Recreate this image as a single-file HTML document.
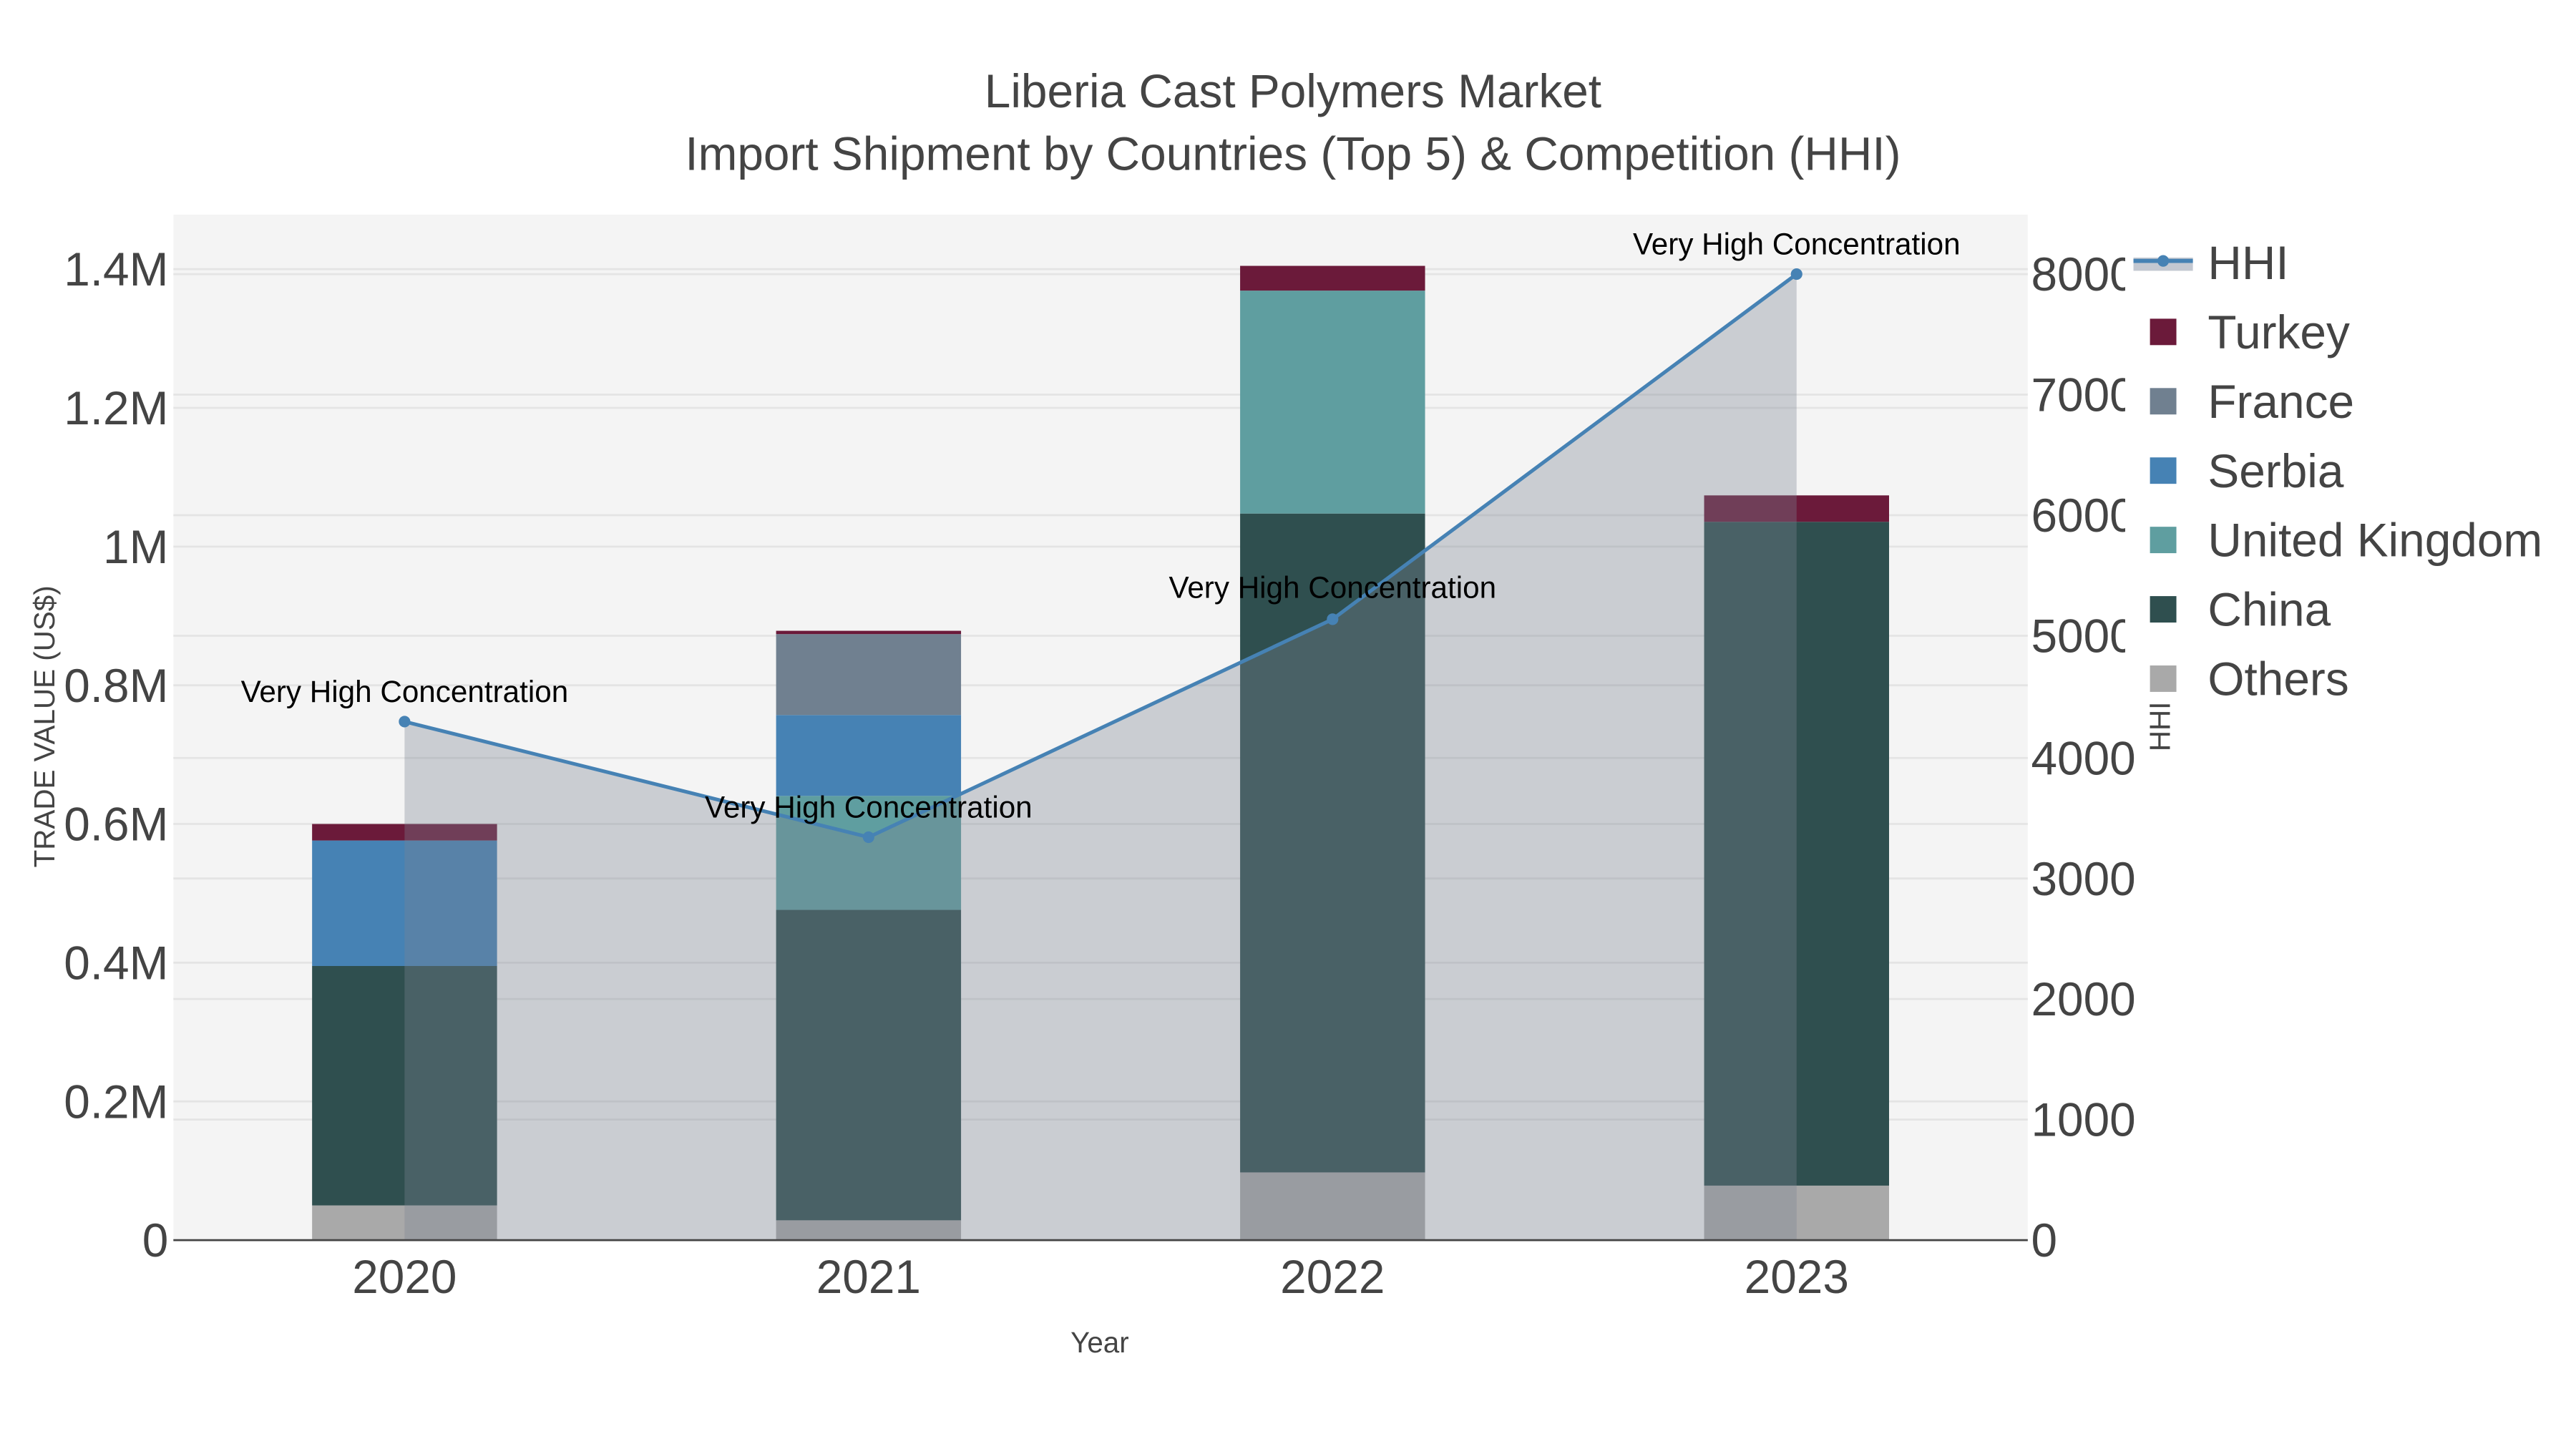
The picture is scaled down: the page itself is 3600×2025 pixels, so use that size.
<!DOCTYPE html>
<html><head><style>html,body{margin:0;padding:0;background:#fff}svg{display:block}</style></head>
<body>
<svg width="3600" height="2025" viewBox="0 0 1560 877.5" xmlns="http://www.w3.org/2000/svg" font-family="Liberation Sans, sans-serif">
<rect x="0" y="0" width="1560" height="877.5" fill="#fff"/>
<rect x="105" y="130" width="1123" height="621" fill="#f4f4f4"/>
<g stroke="#e4e4e4" stroke-width="1.2">
<line x1="105" x2="1228" y1="667" y2="667"/><line x1="105" x2="1228" y1="583" y2="583"/><line x1="105" x2="1228" y1="499" y2="499"/><line x1="105" x2="1228" y1="415" y2="415"/><line x1="105" x2="1228" y1="331" y2="331"/><line x1="105" x2="1228" y1="247" y2="247"/><line x1="105" x2="1228" y1="163" y2="163"/>
<line x1="105" x2="1228" y1="678" y2="678"/><line x1="105" x2="1228" y1="605" y2="605"/><line x1="105" x2="1228" y1="532" y2="532"/><line x1="105" x2="1228" y1="459" y2="459"/><line x1="105" x2="1228" y1="385" y2="385"/><line x1="105" x2="1228" y1="312" y2="312"/><line x1="105" x2="1228" y1="239" y2="239"/><line x1="105" x2="1228" y1="166" y2="166"/>
</g>
<g>
<rect x="189" y="730" width="112" height="21" fill="#a9a9a9"/>
<rect x="189" y="585" width="112" height="145" fill="#2f4f4f"/>
<rect x="189" y="509" width="112" height="76" fill="#4682b4"/>
<rect x="189" y="499" width="112" height="10" fill="#6b1a3a"/>

<rect x="470" y="739" width="112" height="12" fill="#a9a9a9"/>
<rect x="470" y="551" width="112" height="188" fill="#2f4f4f"/>
<rect x="470" y="482" width="112" height="69" fill="#5f9ea0"/>
<rect x="470" y="433" width="112" height="49" fill="#4682b4"/>
<rect x="470" y="384" width="112" height="49" fill="#708090"/>
<rect x="470" y="382" width="112" height="2" fill="#6b1a3a"/>

<rect x="751" y="710" width="112" height="41" fill="#a9a9a9"/>
<rect x="751" y="311" width="112" height="399" fill="#2f4f4f"/>
<rect x="751" y="176" width="112" height="135" fill="#5f9ea0"/>
<rect x="751" y="161" width="112" height="15" fill="#6b1a3a"/>

<rect x="1032" y="718" width="112" height="33" fill="#a9a9a9"/>
<rect x="1032" y="316" width="112" height="402" fill="#2f4f4f"/>
<rect x="1032" y="300" width="112" height="16" fill="#6b1a3a"/>
</g>
<path d="M245,437 L526,507 L807,375 L1088,166 L1088,751 L245,751 Z" fill="rgba(124,131,147,0.35)"/>
<polyline points="245,437 526,507 807,375 1088,166" fill="none" stroke="#4682b4" stroke-width="2.2"/>
<g fill="#4682b4"><circle cx="245" cy="437" r="3.5"/><circle cx="526" cy="507" r="3.5"/><circle cx="807" cy="375" r="3.5"/><circle cx="1088" cy="166" r="3.5"/></g>
<line x1="105" x2="1228" y1="751" y2="751" stroke="#444" stroke-width="1.2"/>
<g font-size="18.3" fill="#000" text-anchor="middle">
<text x="245" y="425">Very High Concentration</text>
<text x="526" y="495">Very High Concentration</text>
<text x="807" y="362">Very High Concentration</text>
<text x="1088" y="154">Very High Concentration</text>
</g>
<g fill="#444" text-anchor="middle" font-size="28.5">
<text x="783" y="65">Liberia Cast Polymers Market</text>
<text x="783" y="103">Import Shipment by Countries (Top 5) &amp; Competition (HHI)</text>
</g>
<g fill="#444" font-size="28.5" text-anchor="end">
<text x="102" y="761">0</text><text x="102" y="677">0.2M</text><text x="102" y="593">0.4M</text><text x="102" y="509">0.6M</text><text x="102" y="425">0.8M</text><text x="102" y="341">1M</text><text x="102" y="257">1.2M</text><text x="102" y="173">1.4M</text>
</g>
<g fill="#444" font-size="28.5">
<text x="1230" y="761">0</text><text x="1230" y="688">1000</text><text x="1230" y="615">2000</text><text x="1230" y="542">3000</text><text x="1230" y="469">4000</text><text x="1230" y="395">5000</text><text x="1230" y="322">6000</text><text x="1230" y="249">7000</text><text x="1230" y="176">8000</text>
</g>
<rect x="1287" y="135" width="273" height="300" fill="#fff"/>
<g fill="#444" font-size="28.5" text-anchor="middle">
<text x="245" y="783">2020</text><text x="526" y="783">2021</text><text x="807" y="783">2022</text><text x="1088" y="783">2023</text>
</g>
<text x="666" y="819" font-size="17.5" fill="#444" text-anchor="middle">Year</text>
<text transform="translate(33,440) rotate(-90)" font-size="17.5" fill="#444" text-anchor="middle">TRADE VALUE (US$)</text>
<text transform="translate(1314,440) rotate(-90)" font-size="17.5" fill="#444" text-anchor="middle">HHI</text>
<rect x="1292" y="156" width="36" height="8" fill="rgba(180,186,198,0.8)"/>
<line x1="1292" x2="1328" y1="158" y2="158" stroke="#4682b4" stroke-width="2.5"/>
<circle cx="1310" cy="158" r="3.5" fill="#4682b4"/>
<g>
<rect x="1302" y="193" width="16" height="16" fill="#6b1a3a"/>
<rect x="1302" y="235" width="16" height="16" fill="#708090"/>
<rect x="1302" y="277" width="16" height="16" fill="#4682b4"/>
<rect x="1302" y="319" width="16" height="16" fill="#5f9ea0"/>
<rect x="1302" y="361" width="16" height="16" fill="#2f4f4f"/>
<rect x="1302" y="403" width="16" height="16" fill="#a9a9a9"/>
</g>
<g fill="#444" font-size="28.5">
<text x="1337" y="169">HHI</text>
<text x="1337" y="211">Turkey</text>
<text x="1337" y="253">France</text>
<text x="1337" y="295">Serbia</text>
<text x="1337" y="337">United Kingdom</text>
<text x="1337" y="379">China</text>
<text x="1337" y="421">Others</text>
</g>
</svg>
</body></html>
